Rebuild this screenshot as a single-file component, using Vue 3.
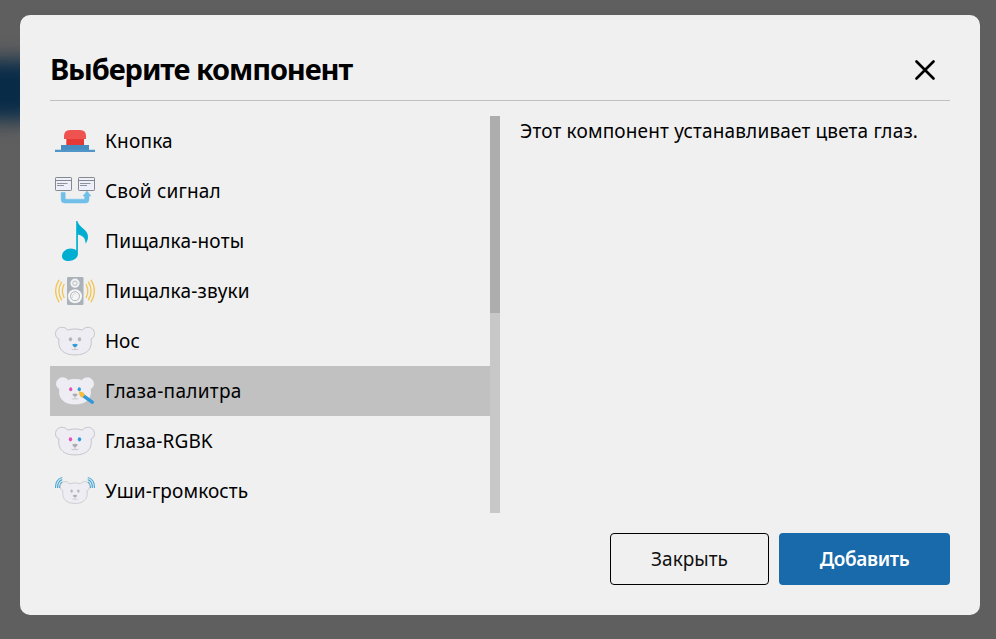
<script setup>
import { ref } from 'vue'

const items = [
  { id: 'button', label: 'Кнопка' },
  { id: 'signal', label: 'Свой сигнал' },
  { id: 'note', label: 'Пищалка-ноты' },
  { id: 'sound', label: 'Пищалка-звуки' },
  { id: 'nose', label: 'Нос' },
  { id: 'palette', label: 'Глаза-палитра' },
  { id: 'rgbk', label: 'Глаза-RGBK' },
  { id: 'ears', label: 'Уши-громкость' },
]
const selected = ref('palette')
const bearHead =
  'M4 12.5C1.500 11.500 .5 9.500 .5 7.200C.5 3.600 3.200 .8 6.800 .8C9.500 .8 11.500 1.900 12.700 3.600C17 2.100 23 2.100 27.300 3.600C28.500 1.900 30.500 .8 33.200 .8C36.800 .8 39.500 3.600 39.500 7.200C39.500 9.500 38.500 11.500 36 12.500C36.600 15 36.300 19 35 21.500C32 27 26 28.400 20 28.400C14 28.400 8 27 5 21.500C3.700 19 3.400 15 4 12.500Z'
const bearTransforms = {
  ears: 'translate(5 10) scale(.75 .79)',
  palette: 'translate(1 6) scale(.95)',
}
</script>

<template>
  <div class="page">
    <div class="blob"></div>
    <main class="modal" role="dialog">
      <header class="head">
        <h1>Выберите компонент</h1>
        <button class="close" aria-label="Закрыть">
          <svg width="20" height="20" viewBox="0 0 20 20">
            <path d="M1.500 1.500L18.500 18.500M18.500 1.500L1.500 18.500" fill="none" stroke="#000" stroke-width="2.600" stroke-linecap="round" />
          </svg>
        </button>
      </header>
      <section class="body">
        <div class="list-wrap">
          <ul class="list">
            <li v-for="item in items" :key="item.id" :class="['item', item.id, { selected: selected === item.id }]" @click="selected = item.id">
              <svg class="icon" width="40" height="40" viewBox="0 0 40 40">
                <g v-if="item.id === 'button'">
                  <path d="M9 18V15Q9 9 15 9H25Q31 9 31 15V18Z" fill="#ef5350" />
                  <path d="M11.300 18H29V24H11.300Z" fill="#e53935" />
                  <path d="M6 24H34V29H6Z" fill="#478cc0" />
                  <path d="M0 28.800H40V31H0Z" fill="#5096c9" />
                </g>
                <g v-else-if="item.id === 'signal'">
                  <path d="M6.100 21.500H10.200V28.200H29.600V25H28L32 20L36 25H34V28.500Q34 32 30.500 32H9.500Q6.100 32 6.100 28.500Z" fill="#70bfe8" stroke="#70bfe8" stroke-width=".5" />
                  <g v-for="x in [0, 23]" :key="x" :transform="`translate(${x} 0)`" fill="#edf0fa" stroke="#85888d">
                    <rect x=".5" y="6.500" width="16" height="13" rx=".7" />
                    <path d="M.5 9.500H16.500" />
                    <path d="M2 12.500H12.500M2 14.500H9" stroke-width=".9" />
                  </g>
                </g>
                <g v-else-if="item.id === 'note'" fill="#00aed1">
                  <path d="M21.200 0H22.400C23.400 6 33 8.500 33 15.500C33 18.500 32 21 30.500 22.800C30.800 17 27.500 14.700 22.900 13.500V33C22.900 37 18.500 40 13.500 40C9.500 40 7 38 7 35.200C7 31 11 27.600 15.800 27.600C18.200 27.600 20 28.300 21.200 29.500Z" />
                </g>
                <g v-else-if="item.id === 'sound'">
                  <rect x="12" y="6" width="16.500" height="28" rx="1.200" fill="#abb1b8" />
                  <circle cx="20" cy="12.200" r="4.600" fill="#f1f2f4" />
                  <circle cx="20" cy="12.200" r="2.200" fill="none" stroke="#b9bdc2" />
                  <circle cx="20" cy="25.200" r="7" fill="#f5f5f6" />
                  <circle cx="20" cy="25.200" r="4.500" fill="none" stroke="#b2b7bc" />
                  <path d="M17.200 27Q17 23 21 22.500" fill="none" stroke="#ced2d5" stroke-width=".8" />
                  <g fill="none" stroke="#f3c451" stroke-width="1.300" stroke-linecap="round">
                    <path d="M3.900 9.200Q-2.700 20 3.900 30.800M6.500 11.200Q1.300 20 6.500 28.800M9 13.500Q5.800 20 9 26.500" />
                    <path d="M36.100 9.200Q42.700 20 36.100 30.800M33.500 11.200Q38.700 20 33.500 28.800M31.200 13.500Q34.400 20 31.200 26.500" />
                  </g>
                </g>
                <g v-else>
                  <g v-if="item.id === 'ears'" fill="none" stroke="#50a9d3" stroke-width="1.200">
                    <path d="M.6 17Q.3 8 7.300 6.500M2.600 17Q2.600 10 7.300 8.700M4.500 17Q5 12 7.300 11" />
                    <path d="M39.400 17Q39.700 8 32.700 6.500M37.400 17Q37.400 10 32.700 8.700M35.500 17Q35 12 32.700 11" />
                  </g>
                  <g :transform="bearTransforms[item.id] || 'translate(0 5.500)'">
                    <path :d="bearHead" fill="#ededf3" :stroke="item.id === 'palette' ? '#ededf3' : '#bebec4'" stroke-width=".9" />
                    <ellipse cx="15.500" cy="12.800" rx="1.700" ry="2.100" :fill="['palette', 'rgbk'].includes(item.id) ? '#e553b5' : '#b5b5ba'" />
                    <ellipse cx="24.500" cy="12.800" rx="1.700" ry="2.100" :fill="['palette', 'rgbk'].includes(item.id) ? '#329bd8' : '#b5b5ba'" />
                    <path d="M17.200 18Q20 16.600 22.800 18Q22.500 20.200 20 21Q17.500 20.200 17.200 18Z" :fill="item.id === 'nose' ? '#329bd8' : '#acacb1'" />
                    <path d="M20 20.500V22.800M16.500 22.500Q18 24 20 22.800Q22 24 23.500 22.500" fill="none" stroke="#bdbdc2" stroke-width=".8" />
                  </g>
                  <g v-if="item.id === 'palette'">
                    <path d="M28.500 24.800L37.200 31.200" stroke="#2e98d8" stroke-width="3.500" stroke-linecap="round" />
                    <path d="M24 20.300L28.200 21.200L29.800 24L27.200 26.700Q24 26.200 24 20.300Z" fill="#f6bd3c" />
                  </g>
                </g>
              </svg>
              <span class="label">{{ item.label }}</span>
            </li>
          </ul>
          <div class="track"><div class="thumb"></div></div>
        </div>
        <p class="description">Этот компонент устанавливает цвета глаз.</p>
      </section>
      <footer class="actions">
        <button class="cancel"><span>Закрыть</span></button>
        <button class="add"><span>Добавить</span></button>
      </footer>
    </main>
  </div>
</template>

<style>
body { overflow: hidden; }
</style>
<style scoped>
* { box-sizing: border-box; }
.page { position: relative; width: 996px; height: 639px; padding: 15px 16px 24px 20px; background: #5f5f5f; overflow: hidden; font-family: "Noto Sans", sans-serif; color: #000; }
.blob { position: absolute; left: -50px; top: 60px; width: 90px; height: 60px; background: #082b48; border-radius: 10px; filter: blur(10px); }
.modal { position: relative; width: 960px; height: 600px; padding: 30px; border-radius: 10px; background: #f0f0f0; }
.head { display: flex; align-items: center; justify-content: space-between; height: 56px; padding-right: 15px; border-bottom: 1px solid #c0c0c0; }
h1 { margin: 0 0 8px; font-size: 29px; line-height: 40px; font-weight: 700; letter-spacing: -1.1px; white-space: nowrap; }
button { font-family: inherit; cursor: pointer; }
.close { width: 20px; height: 20px; padding: 0; margin-bottom: 5px; border: 0; background: none; }
.close svg { display: block; }
.body { display: flex; height: 397px; margin-top: 15px; }
.list-wrap { display: flex; width: 450px; }
.list { width: 440px; margin: 0; padding: 0; list-style: none; }
.item { display: flex; align-items: center; gap: 10px; height: 50px; padding: 0 5px; cursor: pointer; }
.item:last-child { height: 47px; padding-top: 3px; }
.selected { background: #c1c1c1; }
.icon { flex: none; }
.label { font-size: 19px; line-height: 28px; letter-spacing: .2px; white-space: nowrap; }
.palette .label { letter-spacing: .3px; }
.rgbk .label, .ears .label { letter-spacing: .12px; }
.nose .label { letter-spacing: 0; }
.track { width: 10px; background: #c8c8c8; }
.thumb { height: 197px; background: #adadad; }
.description { margin: 1px 0 0 20px; font-size: 19px; line-height: 28px; letter-spacing: .16px; white-space: nowrap; }
.actions { display: flex; justify-content: flex-end; gap: 10px; margin-top: 20px; }
.actions button { height: 52px; padding: 0; border-radius: 4px; font-size: 19px; line-height: 28px; }
.cancel { width: 159px; border: 1px solid #000; background: transparent; color: #111; }
.actions .add { width: 171px; border: 0; background: #196aaa; color: #fff; font-weight: 600; letter-spacing: -.35px; }
</style>
